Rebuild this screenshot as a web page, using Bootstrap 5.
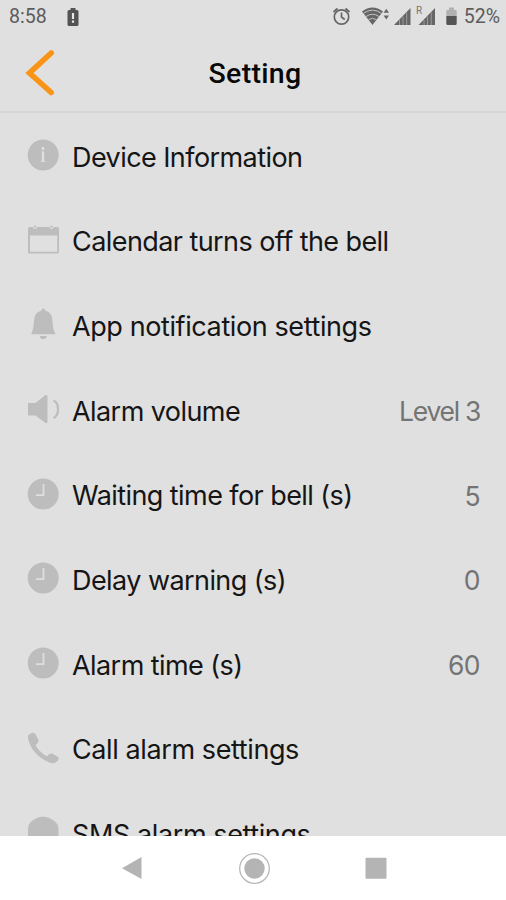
<!DOCTYPE html>
<html lang="en">
<head>
<meta charset="utf-8">
<meta name="viewport" content="width=device-width, initial-scale=1">
<title>Setting</title>
<link href="https://cdn.jsdelivr.net/npm/bootstrap@5.3.0/dist/css/bootstrap.min.css" rel="stylesheet">
<style>
  body { background: #e0e0e0; color: #151515; font-family: Inter, "Liberation Sans", sans-serif; }
  .screen { height: 900px; }
  .status { height: 34px; padding: 0 6px 0 9px; color: #5c5c5c; font: 19.5px/34px Roboto, sans-serif; }
  .status-battery { margin-left: 20px; }
  .status-level { margin-left: 2px; }
  .title-bar { height: 79px; padding: 1px 0 0 25px; border-bottom: 2px solid #d5d5d5; }
  .title-bar h1 { font: 500 28.5px/34px Roboto, sans-serif; color: #080808; letter-spacing: .3px; padding: 2px 51px 0 0; }
  .settings { padding-top: 1px; }
  .setting { height: 84.7px; padding: 0 26px 0 27px; font-size: 27px; line-height: 34px; letter-spacing: -.57px; }
  .setting span { padding-top: 2.6px; }
  .setting svg { width: 32px; height: 34px; margin: -3px 13px 0 0; fill: #bdbdbd; }
  .setting .roomy { letter-spacing: -.4px; }
  .setting .amount { color: #747474; font-size: 26.5px; padding-top: 1px; }
  .amount-word { letter-spacing: -1.3px; }
  .keys { height: 64px; padding: 0 119px 0 121px; }
</style>
<script src="https://cdn.jsdelivr.net/npm/bootstrap@5.3.0/dist/js/bootstrap.bundle.min.js"></script>
</head>
<body>
<svg class="d-none">
  <symbol id="clock" viewBox="0 0 32 34"><circle cx="16.2" cy="17" r="15.5"/><path d="M16.500 7V18.200H9" fill="none" stroke="#dedede" stroke-width="1.8"/></symbol>
</svg>
<div class="screen d-flex flex-column overflow-hidden">
  <div class="status d-flex align-items-center flex-shrink-0">
    <span>8:58</span>
    <svg class="status-battery" width="12" height="20" viewBox="0 0 12 20"><path d="M3.500 1h5v2H10q1.500 0 1.500 1.500V17.500Q11.500 19 10 19H2Q.5 19 .5 17.500V4.500Q.5 3 2 3h1.500z" fill="#535353"/><path d="M6 6v6M6 13.500v2.200" stroke="#e8e8e8" stroke-width="2.200"/></svg>
    <svg class="ms-auto flex-shrink-0" width="130" height="34" viewBox="332 0 130 34" fill="#666">
      <g fill="none" stroke="#666" stroke-width="1.700"><circle cx="341.500" cy="17" r="7.200"/><path d="M341.500 12.500V17l3.200 2.500M333.500 12l4-3.500M349.500 12l-4-3.500"/></g>
      <path d="M372.500 25L362 11.500Q372.500 3.500 383 11.500z"/>
      <path d="M363.500 13.300Q372.500 7 381.500 13.300M366 16.500Q372.500 12 379 16.500M368.500 19.700Q372.500 17 376.500 19.700" fill="none" stroke="#c2c2c2" stroke-width="1"/>
      <path d="M386.300 8.800l2.700 4h-5.400zM386.300 19.500l2.700-4h-5.400z"/>
      <path d="M394 25L410.500 8V25zM418.500 25L435 8V25z"/>
      <path d="M399.500 20v5M403 16.500v8.500M406.700 12.500v12.500M424 20v5M427.500 16.500v8.500M431.200 12.500v12.500" stroke="#aaa" stroke-width=".8"/>
      <text x="416" y="13.500" font-size="10" fill="#777">R</text>
      <path d="M449 7.500h5V10h1.500q1.200 0 1.200 1.200V16.500H446.300V11.200q0-1.200 1.200-1.200H449z" fill="#b1b1b1"/><path d="M446.300 16H456.700V23.500q0 1.500-1.500 1.500h-7.400q-1.500 0-1.500-1.500z" fill="#555"/>
    </svg>
    <span class="status-level">52%</span>
  </div>
  <header class="title-bar d-flex align-items-center flex-shrink-0">
    <svg width="30" height="50" viewBox="0 0 30 50"><path d="M26.200 5L4.500 25L26.200 44.500" fill="none" stroke="#fa9416" stroke-width="5.600" stroke-linecap="round" stroke-linejoin="miter"/></svg>
    <h1 class="m-0 flex-fill text-center">Setting</h1>
  </header>
  <main class="settings flex-fill overflow-hidden">
    <div class="setting d-flex align-items-center"><svg viewBox="0 0 32 34"><circle cx="16.200" cy="17" r="15.500"/><path d="M13.500 14H17M13.500 23.500H18.500" fill="none" stroke="#d0d0d0" stroke-width="1"/><path d="M16 13.500V24M16 9v3" stroke="#e0e0e0" stroke-width="2.300"/></svg><span>Device Information</span></div>
    <div class="setting d-flex align-items-center"><svg viewBox="0 0 32 34"><path fill-rule="evenodd" d="M1 5.500Q1 4 2.500 4H6Q8 1 10 4H22.500Q24.500 1 26.500 4H30.500Q32 4 32 5.500V29Q32 30.500 30.500 30.500H2.500Q1 30.500 1 29zM3 12.500V28.700H30.200V12.500z"/><path d="M6 3.500Q8 7.500 10 3.500M22.500 3.500Q24.500 7.500 26.500 3.500" fill="none" stroke="#e0e0e0" stroke-width="1.200"/></svg><span>Calendar turns off the bell</span></div>
    <div class="setting d-flex align-items-center"><svg viewBox="0 0 32 34"><path d="M16.300 1.500Q18 1.500 18.200 3.500Q25.500 5.500 25.500 14Q25.500 21.500 28.500 27.300H4.200Q7 21.500 7 14Q7 5.500 14.400 3.500Q14.600 1.500 16.300 1.500zM12.500 29H20Q19 32.300 16.300 32.300T12.500 29z"/></svg><span class="roomy">App notification settings</span></div>
    <div class="setting d-flex align-items-center"><svg viewBox="0 0 32 34"><path d="M1 11H8.500L18.500 3Q20.500 2.500 20.500 4.500V29.500Q20.500 31.500 18.500 31L8.500 23.500H1z"/><path d="M26.500 8.500Q31 10.500 31 17.200T26.500 26" fill="none" stroke="#bdbdbd" stroke-width="2.200"/></svg><span>Alarm volume</span><span class="amount amount-word ms-auto">Level 3</span></div>
    <div class="setting d-flex align-items-center"><svg><use href="#clock"/></svg><span>Waiting time for bell (s)</span><span class="amount ms-auto">5</span></div>
    <div class="setting d-flex align-items-center"><svg><use href="#clock"/></svg><span>Delay warning (s)</span><span class="amount ms-auto">0</span></div>
    <div class="setting d-flex align-items-center"><svg><use href="#clock"/></svg><span>Alarm time (s)</span><span class="amount ms-auto">60</span></div>
    <div class="setting d-flex align-items-center"><svg viewBox="0 0 32 34"><path d="M2 3.500Q6 .5 8.500 3L11.500 9Q12 12 8.500 14Q12 21 20 25.500Q22 22 25 22.500L31 26Q32.500 28 30.500 30Q27 33.500 22.500 31.500C11 27 3.500 18 1.200 8Q.5 5 2 3.500z"/></svg><span class="roomy">Call alarm settings</span></div>
    <div class="setting d-flex align-items-center"><svg viewBox="0 0 32 34"><path d="M1 14Q1 8.500 6 5Q16 -2 26 5Q31.500 8.500 31.500 14V30H1z"/></svg><span class="roomy">SMS alarm settings</span></div>
  </main>
  <nav class="keys bg-white d-flex align-items-center justify-content-between flex-shrink-0">
    <svg width="22" height="26" viewBox="0 0 22 26" fill="#b4b4b4"><path d="M20.500 2V24L1 13.200z"/></svg>
    <svg width="34" height="34" viewBox="0 0 34 34" fill="#b4b4b4"><circle cx="17.500" cy="17.500" r="10.200"/><circle cx="17.500" cy="17.500" r="14.800" fill="none" stroke="#b8b8b8" stroke-width="1.300"/></svg>
    <svg width="22" height="22" viewBox="0 0 22 22" fill="#b4b4b4"><rect x=".5" y=".7" width="21" height="21" rx="1"/></svg>
  </nav>
</div>
</body>
</html>
